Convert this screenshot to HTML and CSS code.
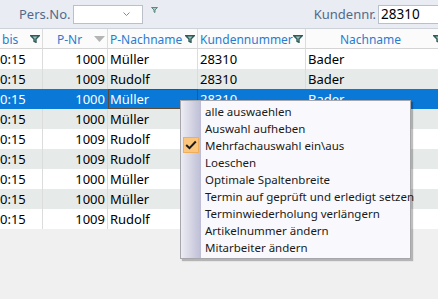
FILE: index.html
```html
<!DOCTYPE html>
<html lang="de">
<head>
  <meta charset="UTF-8" />
  <title>Termine</title>
  <link rel="stylesheet" href="styles.css">
</head>
<body>
  <div class="toolbar">
    <label class="tb-label">Pers.No.</label>
    <div class="combo">
      <svg class="chevron" width="7" height="4" viewBox="0 0 7 4"><path d="M0.5 0.5 L3.5 3.5 L6.5 0.5" fill="none" stroke="#888" stroke-width="1"/></svg>
    </div>
    <svg class="tb-filter" width="7" height="6" viewBox="0 0 7 6"><path d="M0.5 0.5 H6.5 L4 3 V5.5 L3 5 V3 Z" fill="#a9c8c4" stroke="#5d8a86" stroke-width="1"/></svg>
    <div class="spacer"></div>
    <label class="tb-label">Kundennr.</label>
    <div class="textbox">28310</div>
  </div>

  <table class="grid">
    <colgroup>
      <col style="width:43px">
      <col style="width:65px">
      <col style="width:90px">
      <col style="width:108px">
      <col style="width:140px">
    </colgroup>
    <thead>
      <tr>
        <th><div class="hcell"><span class="htext">bis</span><svg class="filter" width="10" height="8" viewBox="0 0 10 8"><path d="M0.8 0.8 H9.2 L6 4 V7.3 L4 6.3 V4 Z" fill="#9cc2bc" stroke="#2f5c58" stroke-width="1.4"/></svg></div></th>
        <th><div class="hcell"><span class="htext center">P-Nr</span><svg class="sort" width="11" height="6" viewBox="0 0 11 6"><path d="M0 0 H11 L5.5 6 Z" fill="#b4b4b4"/></svg></div></th>
        <th><div class="hcell"><span class="htext">P-Nachname</span><svg class="filter" width="10" height="8" viewBox="0 0 10 8"><path d="M0.8 0.8 H9.2 L6 4 V7.3 L4 6.3 V4 Z" fill="#9cc2bc" stroke="#2f5c58" stroke-width="1.4"/></svg></div></th>
        <th><div class="hcell"><span class="htext">Kundennummer</span><svg class="filter" width="10" height="8" viewBox="0 0 10 8"><path d="M0.8 0.8 H9.2 L6 4 V7.3 L4 6.3 V4 Z" fill="#9cc2bc" stroke="#2f5c58" stroke-width="1.4"/></svg></div></th>
        <th><div class="hcell"><span class="htext center">Nachname</span><svg class="filter" width="10" height="8" viewBox="0 0 10 8"><path d="M0.8 0.8 H9.2 L6 4 V7.3 L4 6.3 V4 Z" fill="#9cc2bc" stroke="#2f5c58" stroke-width="1.4"/></svg></div></th>
      </tr>
    </thead>
    <tbody>
      <tr><td>0:15</td><td class="num">1000</td><td>Müller</td><td>28310</td><td>Bader</td></tr>
      <tr class="alt"><td>0:15</td><td class="num">1009</td><td>Rudolf</td><td>28310</td><td>Bader</td></tr>
      <tr class="selected"><td>0:15</td><td class="num">1000</td><td class="focus">Müller</td><td>28310</td><td>Bader</td></tr>
      <tr class="alt"><td>0:15</td><td class="num">1000</td><td>Müller</td><td>28310</td><td>Bader</td></tr>
      <tr><td>0:15</td><td class="num">1009</td><td>Rudolf</td><td>28310</td><td>Bader</td></tr>
      <tr class="alt"><td>0:15</td><td class="num">1009</td><td>Rudolf</td><td>28310</td><td>Bader</td></tr>
      <tr><td>0:15</td><td class="num">1000</td><td>Müller</td><td>28310</td><td>Bader</td></tr>
      <tr class="alt"><td>0:15</td><td class="num">1000</td><td>Müller</td><td>28310</td><td>Bader</td></tr>
      <tr><td>0:15</td><td class="num">1009</td><td>Rudolf</td><td>28310</td><td>Bader</td></tr>
    </tbody>
  </table>

  <div class="menu">
    <div class="menu-item">alle auswaehlen</div>
    <div class="menu-item">Auswahl aufheben</div>
    <div class="menu-item checked">
      <span class="check"><svg width="12" height="10" viewBox="0 0 12 10"><path d="M1.2 5 L4.5 8.2 L10.8 1.5" fill="none" stroke="#1c1c1c" stroke-width="2"/></svg></span>
      Mehrfachauswahl ein\aus
    </div>
    <div class="menu-item">Loeschen</div>
    <div class="menu-item">Optimale Spaltenbreite</div>
    <div class="menu-item">Termin auf geprüft und erledigt setzen</div>
    <div class="menu-item">Terminwiederholung verlängern</div>
    <div class="menu-item">Artikelnummer ändern</div>
    <div class="menu-item">Mitarbeiter ändern</div>
  </div>
</body>
</html>
```

FILE: styles.css
```css
body {
  margin: 0;
  background-color: #f0f0f0;
  font-family: 'Noto Sans', 'Open Sans', sans-serif;
  color: #000;
  overflow: hidden;
  width: 438px;
  height: 299px;
  position: relative;
}
.toolbar {
  display: flex;
  align-items: center;
  height: 29px;
  padding-left: 19px;
  background-color: #e9edf3;
  border-bottom: 1px solid #cdd2d9;
  box-sizing: border-box;
}
.tb-label {
  font-size: 13px;
  color: #52698a;
  margin-right: 2px;
}
.combo {
  width: 70px;
  height: 19px;
  background-color: #fff;
  border: 1px solid #b9c0ca;
  box-sizing: border-box;
  display: flex;
  align-items: center;
  justify-content: flex-end;
  padding-right: 12px;
}
.tb-filter {
  margin-left: 8px;
  align-self: flex-start;
  margin-top: 7px;
}
.spacer {
  flex: 1;
}
.textbox {
  width: 63px;
  height: 19px;
  margin-right: -3px;
  background-color: #fff;
  border: 1px solid #b9c0ca;
  box-sizing: border-box;
  font-size: 13.5px;
  line-height: 17px;
  padding-left: 2px;
}
.grid {
  table-layout: fixed;
  width: 446px;
  border-collapse: separate;
  border-spacing: 0;
  font-size: 13px;
}
.grid th {
  height: 19px;
  padding: 0;
  background-color: #fbfbfb;
  border-right: 1px solid #dcdcdc;
  border-bottom: 1px solid #d4d4d4;
  font-weight: normal;
  font-size: 12px;
  color: #2a7bd0;
}
.hcell {
  display: flex;
  align-items: center;
  padding: 1px 2px 0 2px;
}
.htext {
  flex: 1;
  text-align: left;
  white-space: nowrap;
}
.htext.center {
  text-align: center;
}
.grid td {
  height: 20px;
  padding: 0 2px;
  border-right: 1px solid #dcdcdc;
  background-color: #fff;
  white-space: nowrap;
  overflow: hidden;
  line-height: 18px;
}
.grid td:first-child {
  padding-left: 0;
}
.grid td.num {
  text-align: right;
}
.grid tr.alt td {
  background-color: #e6ebea;
}
.grid tr.selected td {
  background-color: #0a78d7;
  border-right-color: #0a78d7;
  color: #fff;
}
.grid tr.selected td.focus {
  outline: 1px solid #5b4a38;
  outline-offset: -1px;
}
.menu {
  position: absolute;
  left: 180px;
  top: 100px;
  width: 231px;
  padding: 2px 0;
  box-sizing: border-box;
  background-color: #f9f9fd;
  border: 1px solid #a7a7ab;
  box-shadow: 2px 2px 1px rgba(0, 0, 0, 0.25);
  font-size: 11.5px;
}
.menu::before {
  content: '';
  position: absolute;
  left: 0;
  top: 0;
  bottom: 0;
  width: 20px;
  background: linear-gradient(to right, #ededf4, #bdbdd6);
}
.menu-item {
  position: relative;
  height: 17px;
  line-height: 17px;
  padding-left: 24px;
  white-space: nowrap;
  color: #1a1a1a;
}
.check {
  position: absolute;
  left: 2px;
  top: 0;
  width: 16px;
  height: 16px;
  background-color: #fbc57c;
  border: 1px solid #f0ae5a;
  box-sizing: border-box;
  display: flex;
  align-items: center;
  justify-content: center;
}
```
